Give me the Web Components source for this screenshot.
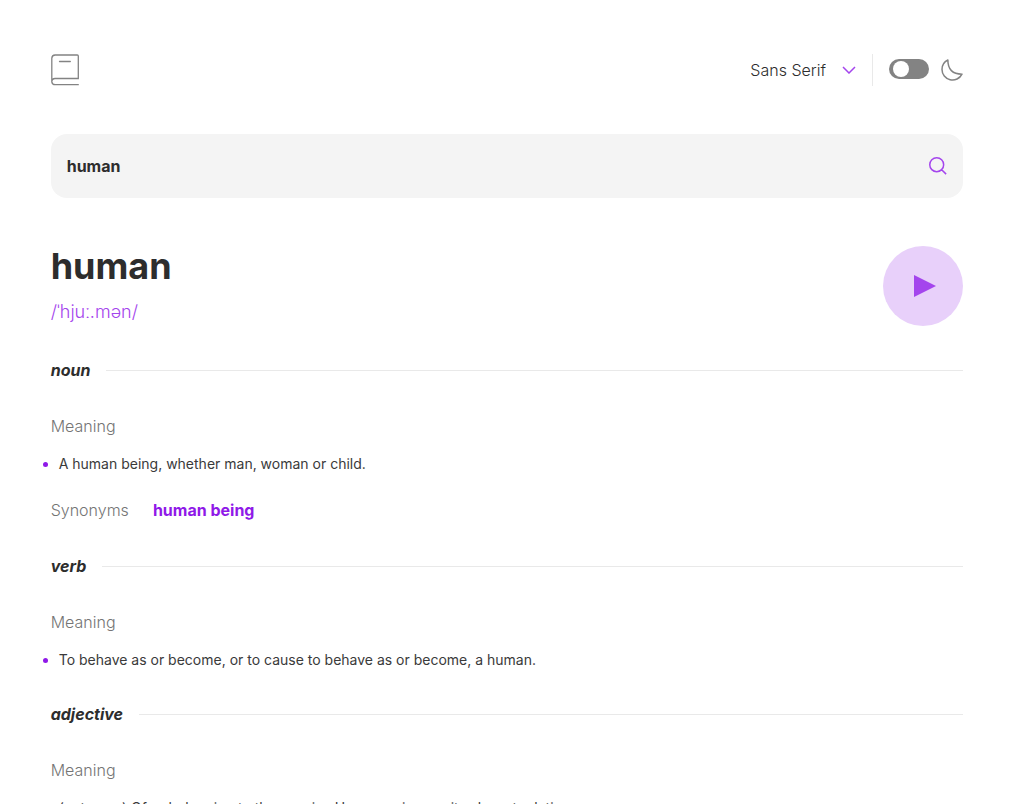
<!DOCTYPE html>
<html lang="en">
<head>
<meta charset="utf-8">
<meta name="viewport" content="width=device-width, initial-scale=1">
<title>Dictionary</title>
<style>
  html { background: #fff; }
  html, body { height: 100%; overflow: hidden; }
  body { margin: 0; font: 300 16px/24px Inter, sans-serif; color: #2d2d2d; }
</style>
</head>
<body>
<dictionary-app></dictionary-app>
<script>
const define = (name, html) => {
  const template = document.createElement('template');
  template.innerHTML = html;
  customElements.define(name, class extends HTMLElement {
    constructor() {
      super();
      this.attachShadow({ mode: 'open' }).append(template.content.cloneNode(true));
    }
  });
};

define('font-picker', `
  <style>
    :host { display: grid; align-items: center; }
    select, svg { grid-area: 1 / 1; }
    select { appearance: none; border: 0; background: none; margin: 0; padding: 0 32px 0 0;
      font: inherit; color: inherit; cursor: pointer; width: 108px; height: 24px; }
    svg { justify-self: end; margin-right: 2px; pointer-events: none; }
  </style>
  <select aria-label="Font"><option>Sans Serif</option><option>Serif</option><option>Mono</option></select>
  <svg width="14" height="8" viewBox="0 0 14 8" fill="none" stroke="#a445ed" stroke-width="1.5" aria-hidden="true"><path d="m1 1 6 6 6-6"/></svg>
`);

define('theme-switch', `
  <style>
    :host { display: block; }
    label { display: flex; align-items: flex-start; gap: 12px; cursor: pointer; }
    input { appearance: none; margin: 0; width: 40px; height: 20px; border-radius: 10px; background: #838383; display: flex; align-items: center; padding: 0 4px; box-sizing: border-box; }
    input::before { content: ""; width: 16px; height: 16px; border-radius: 50%; background: #fff; }
    input:checked { background: #a445ed; justify-content: flex-end; }
    svg { display: block; }
  </style>
  <label>
    <input type="checkbox" role="switch" aria-label="Dark mode">
    <svg width="22" height="22" viewBox="0 0 22 22" fill="none" stroke="#838383" stroke-width="1.5" stroke-linecap="round" stroke-linejoin="round" aria-hidden="true"><path d="M1 10.449a10.544 10.544 0 0 0 19.993 4.686C11.544 15.135 6.858 10.448 6.858 1A10.545 10.545 0 0 0 1 10.449Z"/></svg>
  </label>
`);

define('app-header', `
  <style>
    :host { display: flex; justify-content: space-between; align-items: center; }
    .logo { display: block; }
    .tools { display: flex; align-items: center; height: 32px; }
    theme-switch { border-left: 1px solid #e9e9e9; margin-left: 14px; padding-left: 16px; height: 32px; display: flex; align-items: center; }
  </style>
  <svg class="logo" width="28" height="32" viewBox="0 0 28 32" fill="none" stroke="#838383" stroke-width="1.3" stroke-linecap="round" role="img" aria-label="Dictionary"><path d="M27.3 30.7H4.1A3.4 3.4 0 0 1 .8 27.8V4.2A3.4 3.4 0 0 1 4.1 1h22.2q1 0 1 1v22.5H4.1A3.4 3.4 0 0 0 .8 27.8M8.5 7.5h10.8"/></svg>
  <div class="tools"><font-picker></font-picker><theme-switch></theme-switch></div>
`);

define('search-box', `
  <style>
    :host { display: block; }
    form { display: flex; align-items: center; height: 64px; padding: 0 16px; box-sizing: border-box; border-radius: 16px; background: #f4f4f4; }
    input { flex: 1; min-width: 0; border: 0; padding: 0; outline: 0; background: none; font: inherit; font-weight: 700; color: inherit; height: 24px; }
    button { border: 0; background: none; padding: 0; cursor: pointer; display: block; }
    svg { display: block; }
  </style>
  <form onsubmit="return false">
    <input type="text" aria-label="Search for a word" value="human">
    <button aria-label="Search"><svg width="18" height="18" viewBox="0 0 18 18" fill="none" stroke="#a445ed" stroke-width="1.5" aria-hidden="true"><path d="m12.663 12.663 4.464 4.464M.755 7.71a6.955 6.955 0 1 0 13.91 0 6.955 6.955 0 0 0-13.91 0Z"/></svg></button>
  </form>
`);

define('word-heading', `
  <style>
    :host { display: flex; justify-content: space-between; align-items: center; }
    h1 { margin: 0; font-size: 36px; line-height: 40px; font-weight: 700; }
    p { margin: 12px 0 0; font-size: 18px; line-height: 28px; color: #a445ed; }
    button { width: 80px; height: 80px; border: 0; padding: 0; border-radius: 50%; background: #e8d0fa; display: flex; align-items: center; justify-content: center; cursor: pointer; }
  </style>
  <div><h1><slot name="word"></slot></h1><p><slot name="phonetic"></slot></p></div>
  <button aria-label="Play pronunciation"><svg width="26" height="22" viewBox="-4 0 26 22" aria-hidden="true"><path d="M0 0v22l22-11Z" fill="#a445ed"/></svg></button>
`);

define('word-sense', `
  <style>
    :host { display: block; margin-top: 32px; }
    .part { display: flex; align-items: center; gap: 16px; }
    .part::after { content: ""; flex: 1; height: 1px; background: #e9e9e9; }
    h2 { margin: 0; font-size: 16px; line-height: 24px; font-weight: 700; font-style: italic; }
    h3 { margin: 32px 0 16px; font-size: 16px; line-height: 24px; font-weight: 300; color: #757575; }
    ul { margin: 0; padding: 0 0 0 8px; font-size: 14px; line-height: 20px; font-weight: 400; color: #3a3a3a; }
  </style>
  <div class="part"><h2><slot name="part"></slot></h2></div>
  <h3>Meaning</h3>
  <ul><slot></slot></ul>
  <slot name="synonyms"></slot>
`);

define('sense-meaning', `
  <style>
    :host { display: list-item; list-style: disc; }
    :host::marker { color: #8f19e8; }
  </style>
  <slot></slot>
`);

define('synonym-list', `
  <style>
    :host { display: flex; gap: 24px; margin-top: 24px; }
    h3 { margin: 0; font-size: 16px; line-height: 24px; font-weight: 300; color: #757575; }
    div { font-weight: 700; color: #8f19e8; }
  </style>
  <h3>Synonyms</h3><div><slot></slot></div>
`);

define('dictionary-app', `
  <style>
    :host { display: block; padding: 54px 5% 48px; }
    search-box { margin-top: 48px; }
    word-heading { margin-top: 48px; }
  </style>
  <app-header></app-header>
  <main>
    <search-box></search-box>
    <word-heading><span slot="word">human</span><span slot="phonetic">/ˈhjuː.mən/</span></word-heading>
    <word-sense><span slot="part">noun</span>
      <sense-meaning>A human being, whether man, woman or child.</sense-meaning>
      <synonym-list slot="synonyms">human being</synonym-list>
    </word-sense>
    <word-sense><span slot="part">verb</span>
      <sense-meaning>To behave as or become, or to cause to behave as or become, a human.</sense-meaning>
    </word-sense>
    <word-sense><span slot="part">adjective</span>
      <sense-meaning>(notcomp) Of or belonging to the species Homo sapiens or its closest relatives.</sense-meaning>
    </word-sense>
  </main>
`);
</script>
</body>
</html>
